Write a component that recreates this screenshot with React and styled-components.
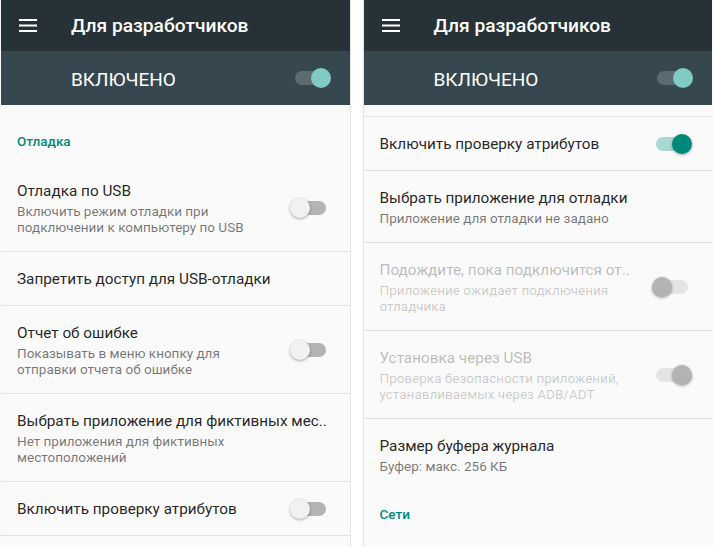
import styled, { createGlobalStyle } from "styled-components";

const GlobalStyle = createGlobalStyle`
  html, body {
    margin: 0;
    padding: 0;
    background: #ffffff;
  }
  body {
    font-family: Roboto, "Noto Sans", sans-serif;
  }
`;

const Screens = styled.div`
  display: flex;
  gap: 12px;
  width: 713px;
  height: 547px;
  overflow: hidden;
  background: #fff;
`;

const Phone = styled.div`
  flex: 1;
  min-width: 0;
  display: flex;
  flex-direction: column;
  background: #fafafa;
  border-left: 1px solid ${(p) => (p.$side === "right" ? "#e4e4e4" : "transparent")};
  border-right: 1px solid ${(p) => (p.$side === "left" ? "#e4e4e4" : "transparent")};
  overflow: hidden;
`;

const Toolbar = styled.div`
  flex: none;
  height: 51px;
  display: flex;
  align-items: center;
  padding-left: 18px;
  background: #263238;
  color: #fff;
`;

const ToolbarTitle = styled.div`
  margin-left: 34px;
  font-size: 19.2px;
  font-weight: 500;
`;

const MasterBar = styled.div`
  flex: none;
  height: 54px;
  display: flex;
  align-items: center;
  justify-content: space-between;
  padding: 0 19px 0 70px;
  background: #37474f;
  color: #fff;
`;

const MasterLabel = styled.span`
  margin-top: 3px;
  font-size: 19px;
`;

const Viewport = styled.div`
  flex: 1;
  overflow: hidden;
`;

const List = styled.div`
  margin-top: ${(p) => p.$offset}px;
`;

const Category = styled.div`
  padding: ${(p) => p.$top ?? 20}px 16px 16px;
  font-size: 13.5px;
  line-height: 14px;
  font-weight: 500;
  color: #00897b;
`;

const Row = styled.div`
  display: flex;
  align-items: center;
  padding: 17px 20px 16px 16px;
  border-bottom: 1px solid ${(p) => (p.$divider ? "#e2e2e2" : "transparent")};
`;

const Texts = styled.div`
  flex: 1;
  min-width: 0;
`;

const RowTitle = styled.div`
  font-size: 15.3px;
  line-height: 20px;
  white-space: nowrap;
  overflow: hidden;
  color: ${(p) => (p.$disabled ? "rgba(0,0,0,0.27)" : "rgba(0,0,0,0.87)")};
`;

const Summary = styled.div`
  margin-top: 2px;
  font-size: 13.5px;
  line-height: 16px;
  white-space: nowrap;
  color: ${(p) => (p.$disabled ? "rgba(0,0,0,0.2)" : "rgba(0,0,0,0.54)")};
`;

const palettes = {
  list: {
    off: { track: "#b4b4b4", thumb: "#f1f1f1" },
    on: { track: "#a9d9d3", thumb: "#00897b" },
  },
  disabled: {
    off: { track: "#e4e4e4", thumb: "#b3b3b3" },
    on: { track: "#e4e4e4", thumb: "#b3b3b3" },
  },
  header: {
    off: { track: "#5c6b71", thumb: "#cfd8dc" },
    on: { track: "#5c6b71", thumb: "#80cbc4" },
  },
};

const SwitchBox = styled.div`
  position: relative;
  flex: none;
  width: 40px;
  height: 20px;
  margin-left: 16px;
`;

const Track = styled.div`
  position: absolute;
  left: 4px;
  right: 4px;
  top: 3px;
  height: 14px;
  border-radius: 7px;
  background: ${(p) => p.$color};
`;

const Thumb = styled.div`
  position: absolute;
  top: 0;
  left: ${(p) => (p.$on ? 20 : 0)}px;
  width: 20px;
  height: 20px;
  border-radius: 50%;
  background: ${(p) => p.$color};
  box-shadow: ${(p) => (p.$flat ? "none" : "0 1px 3px rgba(0,0,0,0.35)")};
`;

function Switch({ on, kind = "list" }) {
  const c = palettes[kind][on ? "on" : "off"];
  return (
    <SwitchBox>
      <Track $color={c.track} />
      <Thumb $on={on} $color={c.thumb} $flat={kind === "header"} />
    </SwitchBox>
  );
}

function MenuIcon() {
  return (
    <svg width="18" height="13" viewBox="0 0 18 13">
      <rect x="0" y="0" width="18" height="2" fill="#fff" />
      <rect x="0" y="5.5" width="18" height="2" fill="#fff" />
      <rect x="0" y="11" width="18" height="2" fill="#fff" />
    </svg>
  );
}

function Pref({ title, lines = [], toggle, disabled, divider = true }) {
  return (
    <Row $divider={divider}>
      <Texts>
        <RowTitle $disabled={disabled}>{title}</RowTitle>
        {lines.length > 0 && (
          <Summary $disabled={disabled}>
            {lines.map((l, i) => (
              <div key={i}>{l}</div>
            ))}
          </Summary>
        )}
      </Texts>
      {toggle !== undefined && (
        <Switch on={toggle} kind={disabled ? "disabled" : "list"} />
      )}
    </Row>
  );
}

function Screen({ side, offset, children }) {
  return (
    <Phone $side={side}>
      <Toolbar>
        <MenuIcon />
        <ToolbarTitle>Для разработчиков</ToolbarTitle>
      </Toolbar>
      <MasterBar>
        <MasterLabel>ВКЛЮЧЕНО</MasterLabel>
        <Switch on kind="header" />
      </MasterBar>
      <Viewport>
        <List $offset={offset}>{children}</List>
      </Viewport>
    </Phone>
  );
}

export default function App() {
  return (
    <>
      <GlobalStyle />
      <Screens>
        <Screen side="left" offset={9}>
          <Category>Отладка</Category>
          <Pref
            title="Отладка по USB"
            lines={["Включить режим отладки при", "подключении к компьютеру по USB"]}
            toggle={false}
          />
          <Pref title="Запретить доступ для USB-отладки" />
          <Pref
            title="Отчет об ошибке"
            lines={["Показывать в меню кнопку для", "отправки отчета об ошибке"]}
            toggle={false}
          />
          <Pref
            title="Выбрать приложение для фиктивных мес.."
            lines={["Нет приложения для фиктивных", "местоположений"]}
          />
          <Pref title="Включить проверку атрибутов" toggle={false} />
          <Pref
            title="Выбрать приложение для отладки"
            lines={["Приложение для отладки не задано"]}
          />
        </Screen>
        <Screen side="right" offset={-76}>
          <Pref
            title="Выбрать приложение для фиктивных мес.."
            lines={["Нет приложения для фиктивных", "местоположений"]}
          />
          <Pref title="Включить проверку атрибутов" toggle={true} />
          <Pref
            title="Выбрать приложение для отладки"
            lines={["Приложение для отладки не задано"]}
          />
          <Pref
            title="Подождите, пока подключится от.."
            lines={["Приложение ожидает подключения", "отладчика"]}
            toggle={false}
            disabled
          />
          <Pref
            title="Установка через USB"
            lines={["Проверка безопасности приложений,", "устанавливаемых через ADB/ADT"]}
            toggle={true}
            disabled
          />
          <Pref
            title="Размер буфера журнала"
            lines={["Буфер: макс. 256 КБ"]}
            divider={false}
          />
          <Category $top={16}>Сети</Category>
        </Screen>
      </Screens>
    </>
  );
}
